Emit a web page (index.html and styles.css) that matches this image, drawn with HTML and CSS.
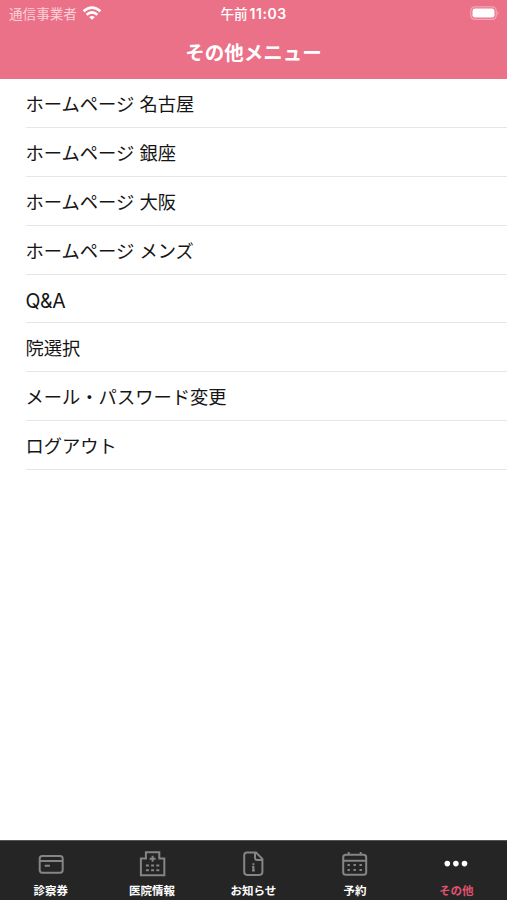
FILE: index.html
```html
<!DOCTYPE html>
<html lang="ja">
<head>
<meta charset="utf-8">
<title>その他メニュー</title>
<link rel="stylesheet" href="styles.css">
</head>
<body>
<div class="app">
  <header class="header">
    <div class="status">
      <div class="carrier"><span>通信事業者</span>
        <svg class="wifi" width="20" height="14" viewBox="0 0 20 14" fill="none" stroke="#fff" stroke-width="2.7"><path d="M1.6 5.2Q10-2 18.4 5.2M4.6 8.7Q10 4 15.4 8.7"/><path d="M10 13.8 7.1 11Q10 8.8 12.9 11Z" fill="#fff" stroke="none"/></svg>
      </div>
      <div class="time"><span>午前</span><span class="clock">11:03</span></div>
      <div class="power">
        <svg width="30" height="15" viewBox="0 0 30 15"><rect x=".8" y=".8" width="25.4" height="12.6" rx="4" fill="none" stroke="#f5a6b5" stroke-width="1.2"/><rect x="2.5" y="2.6" width="22" height="9" rx="2.3" fill="#fff"/><path d="M27.5 5Q29.5 7.1 27.5 9.2Z" fill="#f5a6b5"/></svg>
      </div>
    </div>
    <h1 class="title">その他メニュー</h1>
  </header>
  <ul class="menu">
    <li class="row">ホームページ 名古屋</li>
    <li class="row">ホームページ 銀座</li>
    <li class="row">ホームページ 大阪</li>
    <li class="row">ホームページ メンズ</li>
    <li class="row latin">Q&amp;A</li>
    <li class="row">院選択</li>
    <li class="row">メール・パスワード変更</li>
    <li class="row">ログアウト</li>
  </ul>
  <nav class="tabs">
    <div class="tab">
      <svg class="icon" viewBox="0 0 28 28"><rect x="2.7" y="5.9" width="23" height="16.8" rx="2.6"/><path d="M2.7 10.9h23M7.7 15.8h5.2"/></svg>
      <span>診察券</span>
    </div>
    <div class="tab">
      <svg class="icon" viewBox="0 0 28 28"><path d="M2.9 25.2V8.5h5V2.2h13.4v6.3h5v16.7Z"/><path d="M14.6 5.7v6M11.6 8.7h6M7.9 15.4h3M13.1 15.4h3M18.3 15.4h3M7.9 20.2h3M13.1 20.2h3M18.3 20.2h3"/></svg>
      <span>医院情報</span>
    </div>
    <div class="tab">
      <svg class="icon" viewBox="0 0 28 28"><path d="M8 2.5h9l6.4 6.4v13.2q0 2.8-2.8 2.8H8q-2.8 0-2.8-2.8V5.3Q5.2 2.5 8 2.5ZM16 2.8v5q0 2.3 2.3 2.3h5"/><path d="M14.4 13.2v2M13.1 16.9h1.3v3.7M13 20.6h2.8"/></svg>
      <span>お知らせ</span>
    </div>
    <div class="tab">
      <svg class="icon" viewBox="0 0 28 28"><rect x="2.2" y="4.8" width="23" height="20" rx="2.6"/><path d="M2.2 10.7h23M7.7 1.9v3M19.7 1.9v3"/><path d="M6.5 15h2.4M12.5 15h2.4M18.5 15h2.4M6.5 19.9h2.4M12.5 19.9h2.4M18.5 19.9h2.4"/></svg>
      <span>予約</span>
    </div>
    <div class="tab active">
      <svg class="icon dots" viewBox="0 0 28 28"><circle cx="5.3" cy="13.6" r="2.8"/><circle cx="13.9" cy="13.6" r="2.8"/><circle cx="22.5" cy="13.6" r="2.8"/></svg>
      <span>その他</span>
    </div>
  </nav>
</div>
</body>
</html>
```
FILE: styles.css
```css
* { box-sizing: border-box; }
body {
  margin: 0;
  font-family: Inter, "Noto Sans CJK JP", sans-serif;
  color: #151515;
  background: #fff;
}
.app { height: 900px; display: flex; flex-direction: column; overflow: hidden; }
.header { height: 79px; flex: none; background: #eb7188; color: #fff; }
.status {
  height: 27px;
  display: grid;
  grid-template-columns: 1fr auto 1fr;
  align-items: center;
  padding: 1px 7px 0 9px;
}
.carrier { display: flex; align-items: center; gap: 5px; font-size: 13.6px; line-height: 20px; color: #fbd0d8; }
.wifi { display: block; margin-top: -2px; }
.time { display: flex; align-items: center; gap: 2px; margin-left: -2px; font-size: 13.6px; line-height: 20px; font-weight: 500; }
.clock { font-size: 14px; font-weight: 600; letter-spacing: .5px; }
.power { display: flex; justify-content: flex-end; }
.power svg { display: block; margin-top: -1px; }
.title { margin: 0; padding-top: 10px; text-align: center; font-size: 19.5px; line-height: 30px; font-weight: 600; font-family: "Noto Sans CJK JP", sans-serif; }
.menu { list-style: none; margin: 0; padding: 0 0 0 26px; flex: 1; }
.row {
  height: 48.9px;
  padding-top: 1px;
  border-bottom: 1px solid #e6e6e6;
  font-size: 18.3px;
  line-height: 49px;
  white-space: nowrap;
  text-indent: -.5px;
}
.latin { padding-top: 2px; font-size: 19.5px; letter-spacing: -.4px; }
.tabs { height: 60px; flex: none; display: grid; grid-template-columns: repeat(5, 1fr); background: #252525; border-top: 1px solid #555; }
.tab { display: flex; flex-direction: column; align-items: center; padding-top: 9px; color: #fff; font-size: 11.5px; line-height: 16px; font-weight: 700; }
.tab span { margin-top: 5px; white-space: nowrap; }
.icon { width: 28px; height: 28px; flex: none; fill: none; stroke: #858585; stroke-width: 2; }
.dots { fill: #fff; stroke: none; }
.active { color: #e05270; }
```
